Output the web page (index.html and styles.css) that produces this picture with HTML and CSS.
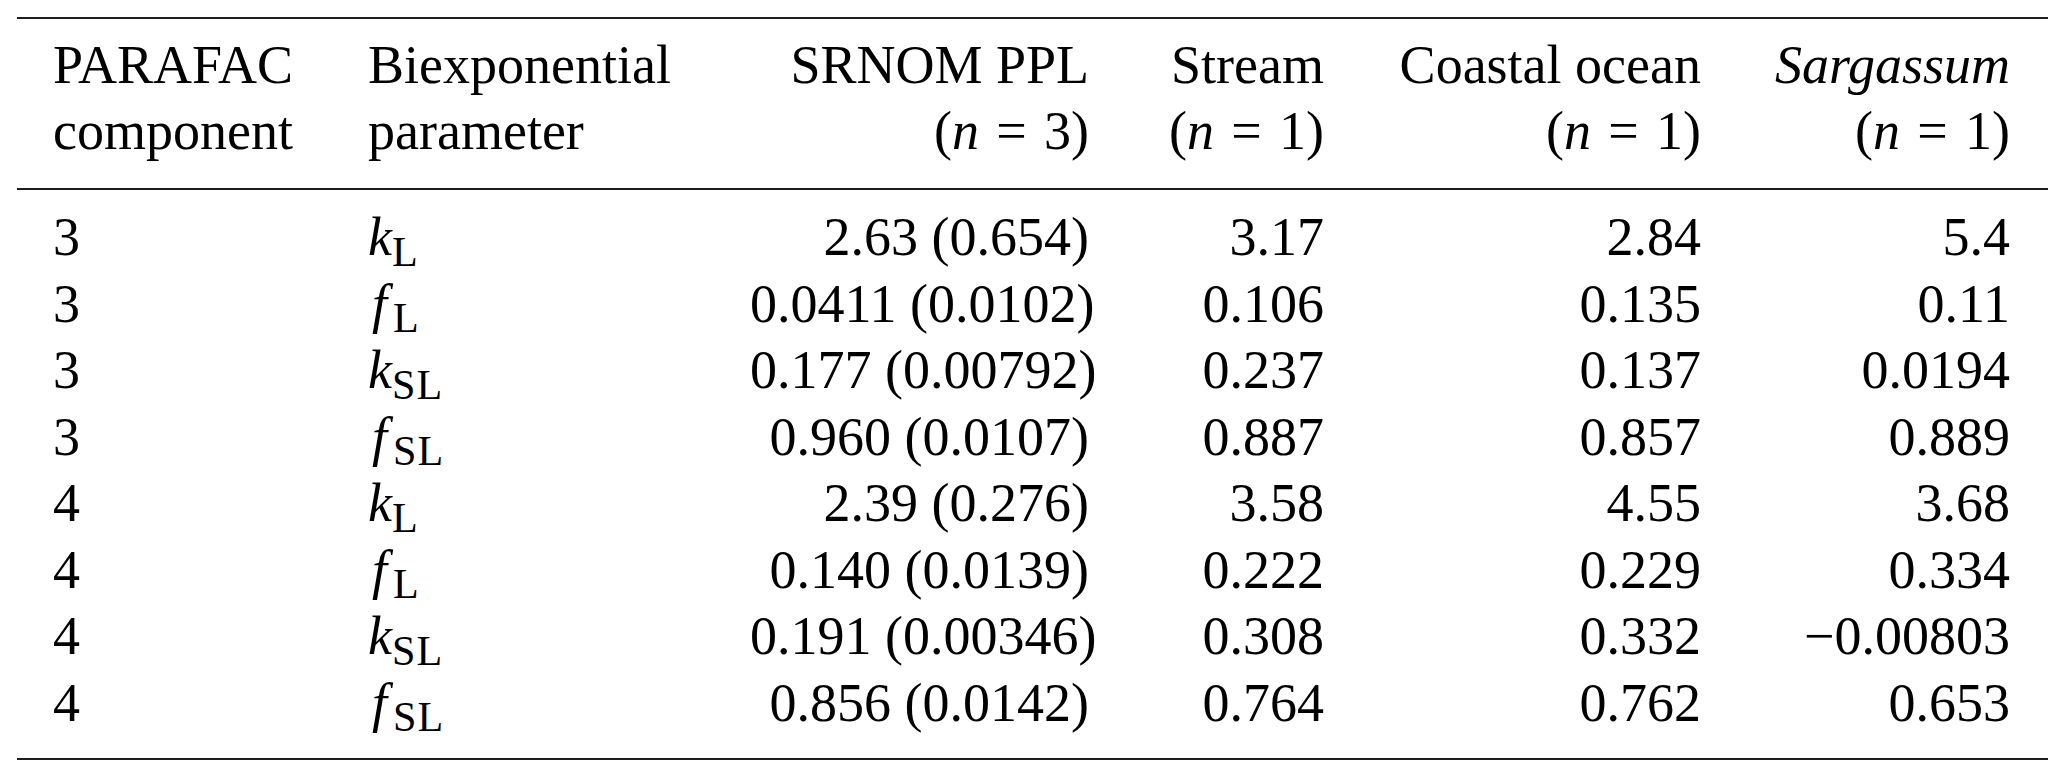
FILE: index.html
```html
<!DOCTYPE html>
<html>
<head>
<meta charset="utf-8">
<link rel="stylesheet" href="styles.css">
</head>
<body>
<table class="data">
  <colgroup>
    <col class="c1"><col class="c2"><col class="c3"><col class="c4"><col class="c5"><col class="c6">
  </colgroup>
  <thead>
    <tr>
      <th class="l first-col">PARAFAC<br>component</th>
      <th class="l">Biexponential<br>parameter</th>
      <th class="r">SRNOM PPL<br>(<i>n</i> <span class="eq">=</span> 3)</th>
      <th class="r">Stream<br>(<i>n</i> <span class="eq">=</span> 1)</th>
      <th class="r">Coastal ocean<br>(<i>n</i> <span class="eq">=</span> 1)</th>
      <th class="r last-col"><i>Sargassum</i><br>(<i>n</i> <span class="eq">=</span> 1)</th>
    </tr>
  </thead>
  <tbody>
    <tr>
      <td class="l first-col">3</td><td class="l"><i>k</i><sub>L</sub></td>
      <td class="r">2.63 (0.654)</td><td class="r">3.17</td><td class="r">2.84</td><td class="r last-col">5.4</td>
    </tr>
    <tr>
      <td class="l first-col">3</td><td class="l"><i class="f">f</i><sub class="fsub">L</sub></td>
      <td class="r">0.0411 (0.0102)</td><td class="r">0.106</td><td class="r">0.135</td><td class="r last-col">0.11</td>
    </tr>
    <tr>
      <td class="l first-col">3</td><td class="l"><i>k</i><sub>SL</sub></td>
      <td class="r">0.177 (0.00792)</td><td class="r">0.237</td><td class="r">0.137</td><td class="r last-col">0.0194</td>
    </tr>
    <tr>
      <td class="l first-col">3</td><td class="l"><i class="f">f</i><sub class="fsub">SL</sub></td>
      <td class="r">0.960 (0.0107)</td><td class="r">0.887</td><td class="r">0.857</td><td class="r last-col">0.889</td>
    </tr>
    <tr>
      <td class="l first-col">4</td><td class="l"><i>k</i><sub>L</sub></td>
      <td class="r">2.39 (0.276)</td><td class="r">3.58</td><td class="r">4.55</td><td class="r last-col">3.68</td>
    </tr>
    <tr>
      <td class="l first-col">4</td><td class="l"><i class="f">f</i><sub class="fsub">L</sub></td>
      <td class="r">0.140 (0.0139)</td><td class="r">0.222</td><td class="r">0.229</td><td class="r last-col">0.334</td>
    </tr>
    <tr>
      <td class="l first-col">4</td><td class="l"><i>k</i><sub>SL</sub></td>
      <td class="r">0.191 (0.00346)</td><td class="r">0.308</td><td class="r">0.332</td><td class="r last-col">&minus;0.00803</td>
    </tr>
    <tr>
      <td class="l first-col">4</td><td class="l"><i class="f">f</i><sub class="fsub">SL</sub></td>
      <td class="r">0.856 (0.0142)</td><td class="r">0.764</td><td class="r">0.762</td><td class="r last-col">0.653</td>
    </tr>
  </tbody>
</table>
</body>
</html>
```
FILE: styles.css
```css
html, body {
  margin: 0;
  padding: 0;
  background: #ffffff;
}

body {
  padding: 17px 0 0 17px;
  font-family: "Liberation Serif", "Times New Roman", serif;
  color: #000000;
}

.data {
  width: 2031px;
  table-layout: fixed;
  border-collapse: separate;
  border-spacing: 0;
  font-size: 54px;
  line-height: 66px;
}

.c1 { width: 351px; }
.c2 { width: 382px; }
.c3 { width: 339px; }
.c4 { width: 235px; }
.c5 { width: 377px; }
.c6 { width: 347px; }

.data th,
.data td {
  padding: 0;
  font-weight: normal;
  white-space: nowrap;
  vertical-align: top;
}

.data th {
  border-top: 2px solid #1e1e1e;
  border-bottom: 2px solid #1e1e1e;
  padding-top: 13px;
  padding-bottom: 24px;
}

.data td {
  line-height: 66.5px;
}

.data tbody tr:first-child td {
  padding-top: 14px;
}

.data tbody tr:last-child td {
  padding-bottom: 22px;
  border-bottom: 2px solid #1e1e1e;
}

.l { text-align: left; }
.r { text-align: right; }

.data .first-col { padding-left: 36px; }
.data .last-col { padding-right: 38px; }

.eq {
  margin: 0 0.07em;
}

.f {
  margin-left: 4px;
}

sub {
  font-size: 0.78em;
  letter-spacing: 1px;
  line-height: 0;
  vertical-align: -0.25em;
}

.fsub {
  margin-left: 6px;
}
```
